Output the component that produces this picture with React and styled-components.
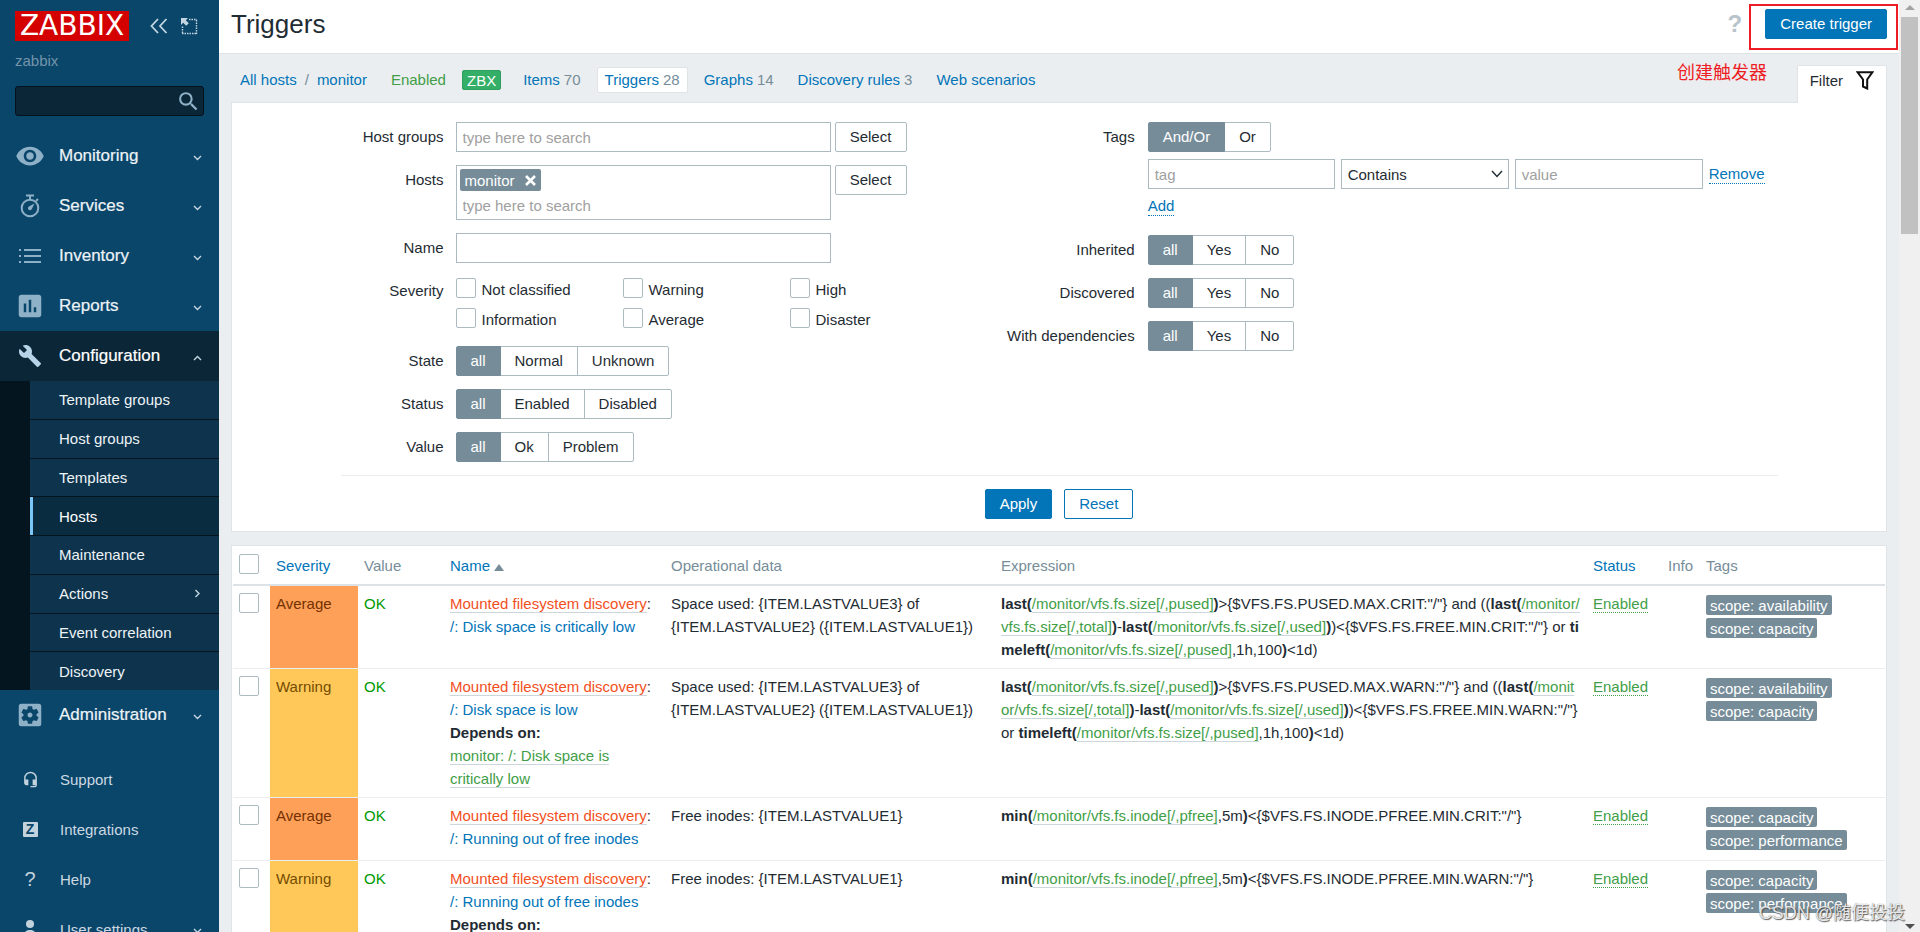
import styled, { createGlobalStyle, css } from 'styled-components';
import {
  MdRemoveRedEye,
  MdAssessment,
  MdBuild,
  MdSettingsApplications,
  MdHeadsetMic,
  MdSearch,
} from 'react-icons/md';

const GlobalStyle = createGlobalStyle`
  * {
    box-sizing: border-box;
  }
  body {
    margin: 0;
    background: #ebeef0;
    color: #1f2c33;
    font-family: 'Liberation Sans', Arial, 'Noto Sans CJK SC', sans-serif;
    font-size: 15px;
  }
  button, input, select {
    font: inherit;
    color: inherit;
  }
  a {
    color: #0275b8;
    text-decoration: none;
  }
`;

const Shell = styled.div`
  position: relative;
  display: flex;
  height: 100vh;
  overflow: hidden;
`;

/* ---------- sidebar ---------- */

const Sidebar = styled.aside`
  flex: 0 0 219px;
  background: #0a466a;
  overflow: hidden;
`;
const SidebarHeader = styled.div`
  display: flex;
  align-items: center;
  padding: 11px 0 0 15px;
`;
const Logo = styled.a`
  flex: 0 0 114px;
  height: 30px;
  margin-right: 21px;
  background: #d40000;
  color: white;
  font-family: 'DejaVu Sans', sans-serif;
  font-size: 28px;
  line-height: 30px;
  text-align: center;
`;
const HeaderIcon = styled.button`
  display: flex;
  padding: 0;
  margin-right: 13px;
  border: none;
  background: none;
  color: #c3d6e2;
`;
const ServerName = styled.div`
  padding: 11px 15px 0;
  line-height: 18px;
  color: #7394aa;
`;
const SearchForm = styled.form`
  display: flex;
  align-items: center;
  height: 30px;
  margin: 16px 15px 15px;
  padding-right: 2px;
  background: #0a2637;
  border: 1px solid #04121b;
  border-radius: 3px;
`;
const SearchInput = styled.input`
  flex: 1;
  min-width: 0;
  border: none;
  outline: none;
  background: none;
  color: white;
`;
const SearchButton = styled.button`
  display: flex;
  padding: 0;
  border: none;
  background: none;
  color: #8fb1c8;
`;
const MenuLink = styled.a`
  display: flex;
  align-items: center;
  height: 50px;
  padding-right: 17px;
  color: #edf3f7;
  font-size: 17px;
  -webkit-text-stroke: 0.2px;
  ${({ $open }) => $open && css`
    background: #0a2637;
    color: white;
  `}
`;
const MenuIcon = styled.span`
  display: flex;
  align-items: center;
  justify-content: center;
  flex: 0 0 59px;
  height: 32px;
  color: ${({ $open }) => ($open ? '#b6d3e7' : '#8fb1c8')};
`;
const MenuText = styled.span`
  flex: 1;
`;
const SubMenu = styled.div`
  display: grid;
  grid-auto-rows: 1fr;
  gap: 1px;
  min-height: 309px;
  padding-left: 30px;
  background: #04151f;
`;
const SubLink = styled.a`
  display: flex;
  align-items: center;
  justify-content: space-between;
  padding: 0 17px 0 26px;
  border-left: 3px solid ${({ $active }) => ($active ? '#7cc6f7' : 'transparent')};
  background: ${({ $active }) => ($active ? '#0a2c40' : '#0e334c')};
  color: ${({ $active }) => ($active ? 'white' : '#edf3f7')};
`;
const FooterMenu = styled.div`
  padding-top: 14px;
`;
const FooterLink = styled.a`
  display: flex;
  align-items: center;
  height: 50px;
  padding-right: 17px;
  color: #ccd9e2;
`;
const FooterIcon = styled.span`
  display: flex;
  align-items: center;
  justify-content: center;
  flex: 0 0 60px;
  font-size: 20px;
  color: #c3d3de;
`;
const ZBadge = styled.span`
  width: 15px;
  height: 15px;
  border-radius: 1px;
  background: #c3d3de;
  color: #0a466a;
  font-size: 14px;
  font-weight: bold;
  line-height: 15px;
  text-align: center;
`;

/* ---------- page frame ---------- */

const Content = styled.div`
  flex: 1;
  min-width: 0;
`;
const PageHeader = styled.header`
  display: flex;
  align-items: center;
  padding: 9px 12px 14px;
  background: white;
  border-bottom: 1px solid #dfe4e7;
`;
const Title = styled.h1`
  flex: 1;
  margin: 0;
  font-size: 26px;
  font-weight: normal;
  line-height: 30px;
`;
const HelpLink = styled.a`
  margin-right: 23px;
  color: #b8c4cb;
  font-size: 24px;
  font-weight: bold;
  line-height: 28px;
`;
const Button = styled.button`
  height: 30px;
  padding: 0 14px 1px;
  border: 1px solid #0275b8;
  border-radius: 2px;
  background: #0275b8;
  color: white;
`;
const OutlineButton = styled(Button)`
  background: white;
  color: #0275b8;
`;
const SelectButton = styled(Button)`
  flex: 0 0 72px;
  border-color: #acbbc2;
  background: white;
  color: #1f2c33;
`;
const Highlight = styled.div`
  position: absolute;
  top: 4px;
  right: 22px;
  width: 149px;
  height: 46px;
  border: 2px solid #ee1c25;
  pointer-events: none;
`;
const Annotation = styled.div`
  position: absolute;
  top: 58px;
  right: 153px;
  color: #ee1c25;
  font-family: 'Noto Sans CJK SC', sans-serif;
  font-size: 18px;
  line-height: 26px;
`;
const Watermark = styled.div`
  position: absolute;
  right: 15px;
  bottom: 6px;
  color: rgba(255, 255, 255, 0.85);
  font-family: 'Liberation Sans', 'Noto Sans CJK SC', sans-serif;
  font-size: 18px;
  line-height: 26px;
  text-shadow: 1px 1px 1px rgba(60, 60, 60, 0.8), 0 0 1px rgba(60, 60, 60, 0.7);
`;
const ScrollTrack = styled.div`
  flex: 0 0 21px;
  display: flex;
  flex-direction: column;
  align-items: center;
  padding: 5px 0 3px;
  background: #f0f0f0;
`;
const ScrollArrow = styled.span`
  border: 5px solid transparent;
  border-top-width: ${({ $down }) => ($down ? '5px' : '0')};
  border-bottom-width: ${({ $down }) => ($down ? '0' : '5px')};
  border-top-color: #505050;
  border-bottom-color: #a3a3a3;
`;
const ScrollThumb = styled.span`
  flex: 0 1 217px;
  width: 17px;
  margin: 7px 0 auto;
  background: #c1c1c1;
`;

/* ---------- host navigation ---------- */

const HostNav = styled.nav`
  display: flex;
  align-items: flex-end;
  justify-content: space-between;
  height: 48px;
  padding: 0 12px;
`;
const NavList = styled.div`
  display: flex;
  align-items: center;
  gap: 8px;
  padding: 0 0 9px 1px;
`;
const NavItem = styled.span`
  display: flex;
  gap: ${({ $crumbs }) => ($crumbs ? '8px' : '4px')};
  height: 26px;
  padding: 0 7px;
  border: 1px solid transparent;
  border-radius: 2px;
  line-height: 24px;
  color: #768d99;
  ${({ $selected }) => $selected && css`
    background: white;
    border-color: #dfe4e7;
  `}
`;
const GreenLink = styled.a`
  color: #429e47;
`;
const ZbxStatus = styled.span`
  height: 20px;
  margin-right: 6px;
  padding: 0 4px;
  border: 1px solid #2f9f5e;
  border-radius: 2px;
  background: #34af67;
  color: white;
  line-height: 19px;
`;
const FilterTab = styled.button`
  position: relative;
  display: flex;
  gap: 13px;
  height: 38px;
  margin-bottom: -1px;
  padding: 0 12px;
  border: 1px solid #dfe4e7;
  border-bottom: none;
  border-radius: 2px 2px 0 0;
  background: white;
  line-height: 30px;
  svg {
    margin-top: 5px;
  }
`;

/* ---------- filter ---------- */

const Panel = styled.section`
  margin: 0 12px 13px;
  background: white;
  border: 1px solid #dfe4e7;
`;
const FilterForm = styled.form`
  max-width: 1437px;
  margin: 0 auto;
`;
const FilterColumns = styled.div`
  display: flex;
  justify-content: space-between;
  align-items: flex-start;
  padding: 19px 13px 13px 0;
  border-bottom: 1px solid #ebeef0;
`;
const FieldGrid = styled.div`
  display: grid;
  grid-template-columns: ${({ $label }) => $label} auto;
  gap: 13px ${({ $gap }) => $gap};
`;
const FieldLabel = styled.label`
  line-height: 30px;
  text-align: right;
  white-space: nowrap;
`;
const FieldRow = styled.div`
  display: flex;
  align-items: flex-start;
  gap: ${({ $gap = '4px' }) => $gap};
`;
const inputBox = css`
  height: 30px;
  border: 1px solid #acbbc2;
  border-radius: 0;
  background: white;
  outline: none;
  &::placeholder {
    color: #a0a0a0;
  }
`;
const TextInput = styled.input`
  ${inputBox}
  width: ${({ $width }) => $width};
  padding: 0 6px;
`;
const MultiSelect = styled.div`
  width: 375px;
  border: 1px solid #acbbc2;
  input {
    ${inputBox}
    display: block;
    width: 100%;
    height: 28px;
    padding: 0 6px;
    border: none;
  }
`;
const ChipRow = styled.div`
  display: flex;
  padding: 3px 3px 0;
`;
const Chip = styled.span`
  display: flex;
  align-items: center;
  gap: 10px;
  height: 22px;
  padding: 0 5px;
  border-radius: 2px;
  background: #768d99;
  color: white;
`;
const ChipRemove = styled.button`
  display: flex;
  padding: 0;
  border: none;
  background: none;
  color: white;
`;
const CheckGrid = styled.div`
  display: grid;
  grid-template-columns: repeat(3, 167px);
  gap: 10px 0;
  padding: 2px 0 5px;
`;
const CheckLabel = styled.label`
  display: flex;
  gap: 6px;
  height: 20px;
  line-height: 24px;
`;
const Checkbox = styled.input.attrs({ type: 'checkbox' })`
  appearance: none;
  display: block;
  flex: 0 0 20px;
  width: 20px;
  height: 20px;
  margin: 0;
  border: 1px solid #acbbc2;
  border-radius: 2px;
  background: white;
`;
const Segments = styled.div`
  display: flex;
`;
const Segment = styled.label`
  position: relative;
  height: 30px;
  padding: 0 14px;
  border: 1px solid #acbbc2;
  line-height: 28px;
  & + & {
    margin-left: -1px;
  }
  &:first-child {
    border-radius: 2px 0 0 2px;
  }
  &:last-child {
    border-radius: 0 2px 2px 0;
  }
  &:has(input:checked) {
    z-index: 1;
    border-color: #768d99;
    background: #768d99;
    color: white;
  }
  input {
    position: absolute;
    inset: 0;
    margin: 0;
    opacity: 0;
  }
`;
const TagFields = styled.div`
  display: flex;
  flex-direction: column;
  align-items: flex-start;
  gap: 7px;
  padding-bottom: 6px;
`;
const SelectWrap = styled.div`
  position: relative;
  width: 168px;
  svg {
    position: absolute;
    top: 11px;
    right: 6px;
    pointer-events: none;
  }
`;
const Select = styled.select`
  ${inputBox}
  appearance: none;
  width: 100%;
  padding: 0 6px;
`;
const DottedButton = styled.button`
  padding: 0;
  border: none;
  border-bottom: 1px dotted #0275b8;
  background: none;
  color: #0275b8;
  line-height: 19px;
`;
const RemoveCell = styled.div`
  padding-top: 5px;
`;
const FilterActions = styled.div`
  display: flex;
  justify-content: center;
  gap: 12px;
  padding: 13px 0 12px;
`;

/* ---------- trigger table ---------- */

const TablePanel = styled(Panel)`
  padding: 0 1px;
`;
const Table = styled.table`
  width: 100%;
  table-layout: fixed;
  border-collapse: separate;
  border-spacing: 0;
`;
const Th = styled.th`
  width: ${({ $width }) => $width};
  height: 40px;
  padding: 1px 6px 0;
  border-bottom: 2px solid #dce2e6;
  color: #768d99;
  font-weight: normal;
  text-align: left;
  white-space: nowrap;
`;
const CheckTh = styled(Th)`
  padding-top: 8px;
  vertical-align: top;
`;
const Td = styled.td`
  padding: 6px 6px 7px;
  border-bottom: 1px solid #ebeef0;
  line-height: 23px;
  vertical-align: top;
`;
const CheckTd = styled(Td)`
  padding-top: 7px;
`;
const severityColors = {
  Average: ['#ffa059', '#733100'],
  Warning: ['#ffc859', '#734d00'],
};
const SeverityTd = styled(Td)`
  background: ${({ $level }) => severityColors[$level][0]};
  color: ${({ $level }) => severityColors[$level][1]};
`;
const OkTd = styled(Td)`
  color: #009900;
`;
const ExpressionTd = styled(Td)`
  word-break: break-all;
`;
const TagsTd = styled(Td)`
  padding: 9px 6px 10px;
`;
const TagList = styled.div`
  display: flex;
  flex-direction: column;
  align-items: flex-start;
  gap: 3px;
`;
const Tag = styled.span`
  height: 20px;
  padding: 0 4px;
  border-radius: 2px;
  background: #768d99;
  color: white;
  line-height: 21px;
`;
const SortArrow = styled.span`
  display: inline-block;
  margin-left: 4px;
  border: 5px solid transparent;
  border-top: none;
  border-bottom: 7px solid #768d99;
`;
const ItemLink = styled.a`
  border-bottom: 1px solid #cdd6da;
  color: #429e47;
`;
const RuleLink = styled(ItemLink)`
  color: #f24f1d;
`;
const StatusLink = styled.a`
  border-bottom: 1px dotted #429e47;
  color: #429e47;
`;

/* ---------- icons ---------- */

const CollapseIcon = () => (
  <svg width="18" height="16" viewBox="0 0 18 16" fill="none" stroke="currentColor" strokeWidth="1.8">
    <path d="M8 1 1.5 8 8 15M16.5 1 10 8l6.500 7" />
  </svg>
);

const KioskIcon = () => (
  <svg width="17" height="17" viewBox="0 0 17 17" fill="none" stroke="currentColor">
    <path d="M8 1.500h8M15.500 2v14M15 15.500H1M1.500 15V8" strokeWidth="1.400" strokeDasharray="1.500 1" />
    <path d="M0 0h7L4.800 2.200l3 3-2.600 2.600-3-3L0 7z" fill="currentColor" stroke="none" />
  </svg>
);

const StopwatchIcon = () => (
  <svg width="20" height="24" viewBox="0 0 20 24" fill="none" stroke="currentColor" strokeWidth="2">
    <circle cx="10" cy="14" r="8.300" />
    <path d="M6 1.500h8M10 2v4M16 7l2-2" />
    <path d="M14.500 9.500 11.800 15a2 2 0 1 1-2.900-2.500z" fill="currentColor" stroke="none" />
  </svg>
);

const ListIcon = () => (
  <svg width="24" height="16" viewBox="0 0 24 16" fill="currentColor">
    <path d="M1 1h2v2H1zM1 7h2v2H1zM1 13h2v2H1zM6 1h17v2H6zM6 7h17v2H6zM6 13h17v2H6z" />
  </svg>
);

const UserIcon = () => (
  <svg width="16" height="18" viewBox="0 0 16 18" fill="currentColor">
    <circle cx="8" cy="4" r="4" />
    <path d="M2 17c0-5 2-7 6-7s6 2 6 7z" />
  </svg>
);

const Chevron = ({ up, right }) => (
  <svg width="9" height="9" viewBox="0 0 9 9" fill="none" stroke="#c3d6e2" strokeWidth="1.400">
    <path d={right ? 'M2.500 1 6 4.500 2.500 8' : up ? 'M1 8l3.500-3.500L8 8' : 'M1 4l3.500 3.500L8 4'} />
  </svg>
);

const FunnelIcon = () => (
  <svg width="18" height="19" viewBox="0 0 18 19" fill="none" stroke="#111" strokeWidth="2">
    <path d="M1.500 1.200h15L11.200 8.500v9L7 15.500v-7z" />
  </svg>
);

/* ---------- data ---------- */

const menu = [
  { text: 'Monitoring', icon: <MdRemoveRedEye size={30} /> },
  { text: 'Services', icon: <StopwatchIcon /> },
  { text: 'Inventory', icon: <ListIcon /> },
  { text: 'Reports', icon: <MdAssessment size={30} /> },
];

const subMenu = [
  'Template groups',
  'Host groups',
  'Templates',
  'Hosts',
  'Maintenance',
  'Actions',
  'Event correlation',
  'Discovery',
];

const footerMenu = [
  { text: 'Support', icon: <MdHeadsetMic size={17} /> },
  { text: 'Integrations', icon: <ZBadge>Z</ZBadge> },
  { text: 'Help', icon: '?' },
  { text: 'User settings', icon: <UserIcon />, more: true },
];

const hostLinks = [
  ['Items', 70],
  ['Triggers', 28],
  ['Graphs', 14],
  ['Discovery rules', 3],
  ['Web scenarios'],
];

const severities = ['Not classified', 'Warning', 'High', 'Information', 'Average', 'Disaster'];

const spaceData = 'Space used: {ITEM.LASTVALUE3} of {ITEM.LASTVALUE2} ({ITEM.LASTVALUE1})';

const SpaceExpression = ({ level }) => (
  <>
    <b>last(</b><ItemLink href="#">/monitor/vfs.fs.size[/,pused]</ItemLink><b>)</b>
    {`>{$VFS.FS.PUSED.MAX.${level}:"/"} and ((`}
    <b>last(</b><ItemLink href="#">/monitor/vfs.fs.size[/,total]</ItemLink><b>)</b>-
    <b>last(</b><ItemLink href="#">/monitor/vfs.fs.size[/,used]</ItemLink><b>)</b>
    {`)<{$VFS.FS.FREE.MIN.${level}:"/"} or `}
    <b>timeleft(</b><ItemLink href="#">/monitor/vfs.fs.size[/,pused]</ItemLink>,1h,100<b>)</b>
    {'<1d)'}
  </>
);

const InodeExpression = ({ level }) => (
  <>
    <b>min(</b><ItemLink href="#">/monitor/vfs.fs.inode[/,pfree]</ItemLink>,5m<b>)</b>
    {`<{$VFS.FS.INODE.PFREE.MIN.${level}:"/"}`}
  </>
);

const triggers = [
  {
    severity: 'Average',
    name: '/: Disk space is critically low',
    data: spaceData,
    expression: <SpaceExpression level="CRIT" />,
    tags: ['scope: availability', 'scope: capacity'],
  },
  {
    severity: 'Warning',
    name: '/: Disk space is low',
    depends: 'monitor: /: Disk space is critically low',
    data: spaceData,
    expression: <SpaceExpression level="WARN" />,
    tags: ['scope: availability', 'scope: capacity'],
  },
  {
    severity: 'Average',
    name: '/: Running out of free inodes',
    data: 'Free inodes: {ITEM.LASTVALUE1}',
    expression: <InodeExpression level="CRIT" />,
    tags: ['scope: capacity', 'scope: performance'],
  },
  {
    severity: 'Warning',
    name: '/: Running out of free inodes',
    depends: 'monitor: /: Running out of free inodes',
    data: 'Free inodes: {ITEM.LASTVALUE1}',
    expression: <InodeExpression level="WARN" />,
    tags: ['scope: capacity', 'scope: performance'],
  },
];

/* ---------- components ---------- */

function MenuItem({ icon, text, open }) {
  return (
    <MenuLink href="#" $open={open}>
      <MenuIcon $open={open}>{icon}</MenuIcon>
      <MenuText>{text}</MenuText>
      <Chevron up={open} />
    </MenuLink>
  );
}

function SideMenu() {
  return (
    <Sidebar>
      <SidebarHeader>
        <Logo href="#">ZABBIX</Logo>
        <HeaderIcon aria-label="Collapse sidebar"><CollapseIcon /></HeaderIcon>
        <HeaderIcon aria-label="Hide sidebar"><KioskIcon /></HeaderIcon>
      </SidebarHeader>
      <ServerName>zabbix</ServerName>
      <SearchForm>
        <SearchInput type="text" aria-label="Search" />
        <SearchButton type="button" aria-label="Search"><MdSearch size={25} /></SearchButton>
      </SearchForm>
      {menu.map((item) => <MenuItem key={item.text} {...item} />)}
      <MenuItem text="Configuration" icon={<MdBuild size={24} />} open />
      <SubMenu>
        {subMenu.map((text) => (
          <SubLink key={text} href="#" $active={text === 'Hosts'}>
            {text}
            {text === 'Actions' && <Chevron right />}
          </SubLink>
        ))}
      </SubMenu>
      <MenuItem text="Administration" icon={<MdSettingsApplications size={30} />} />
      <FooterMenu>
        {footerMenu.map(({ text, icon, more }) => (
          <FooterLink key={text} href="#">
            <FooterIcon>{icon}</FooterIcon>
            <MenuText>{text}</MenuText>
            {more && <Chevron />}
          </FooterLink>
        ))}
      </FooterMenu>
    </Sidebar>
  );
}

function RadioField({ label, name, options }) {
  return (
    <>
      <FieldLabel as="span" id={`${name}-label`}>{label}</FieldLabel>
      <Segments role="radiogroup" aria-labelledby={`${name}-label`}>
        {options.map((option, i) => (
          <Segment key={option}>
            <input type="radio" name={name} defaultChecked={i === 0} />
            {option}
          </Segment>
        ))}
      </Segments>
    </>
  );
}

function Filter() {
  return (
    <Panel>
      <FilterForm>
        <FilterColumns>
          <FieldGrid $label="103px" $gap="12px">
            <FieldLabel htmlFor="groups">Host groups</FieldLabel>
            <FieldRow>
              <MultiSelect>
                <input id="groups" type="text" placeholder="type here to search" />
              </MultiSelect>
              <SelectButton type="button">Select</SelectButton>
            </FieldRow>
            <FieldLabel htmlFor="hosts">Hosts</FieldLabel>
            <FieldRow>
              <MultiSelect>
                <ChipRow>
                  <Chip>
                    monitor
                    <ChipRemove type="button" aria-label="Remove monitor">
                      <svg width="11" height="11" viewBox="0 0 11 11" stroke="currentColor" strokeWidth="2.600">
                        <path d="M1 1l9 9M10 1l-9 9" />
                      </svg>
                    </ChipRemove>
                  </Chip>
                </ChipRow>
                <input id="hosts" type="text" placeholder="type here to search" />
              </MultiSelect>
              <SelectButton type="button">Select</SelectButton>
            </FieldRow>
            <FieldLabel htmlFor="name">Name</FieldLabel>
            <TextInput id="name" type="text" $width="375px" />
            <FieldLabel as="span">Severity</FieldLabel>
            <CheckGrid>
              {severities.map((text) => (
                <CheckLabel key={text}><Checkbox />{text}</CheckLabel>
              ))}
            </CheckGrid>
            <RadioField label="State" name="state" options={['all', 'Normal', 'Unknown']} />
            <RadioField label="Status" name="status" options={['all', 'Enabled', 'Disabled']} />
            <RadioField label="Value" name="value" options={['all', 'Ok', 'Problem']} />
          </FieldGrid>
          <FieldGrid $label="128px" $gap="13px">
            <FieldLabel as="span" id="tags-label">Tags</FieldLabel>
            <TagFields>
              <Segments role="radiogroup" aria-labelledby="tags-label">
                <Segment><input type="radio" name="evaltype" defaultChecked />And/Or</Segment>
                <Segment><input type="radio" name="evaltype" />Or</Segment>
              </Segments>
              <FieldRow $gap="6px">
                <TextInput type="text" placeholder="tag" aria-label="tag" $width="187px" />
                <SelectWrap>
                  <Select aria-label="Operator" defaultValue="Contains">
                    <option>Contains</option>
                    <option>Equals</option>
                  </Select>
                  <svg width="12" height="8" viewBox="0 0 12 8" fill="none" stroke="#1f2c33" strokeWidth="1.400">
                    <path d="M1 1l5 5.500L11 1" />
                  </svg>
                </SelectWrap>
                <TextInput type="text" placeholder="value" aria-label="value" $width="188px" />
                <RemoveCell><DottedButton type="button">Remove</DottedButton></RemoveCell>
              </FieldRow>
              <DottedButton type="button">Add</DottedButton>
            </TagFields>
            <RadioField label="Inherited" name="inherited" options={['all', 'Yes', 'No']} />
            <RadioField label="Discovered" name="discovered" options={['all', 'Yes', 'No']} />
            <RadioField label="With dependencies" name="dependent" options={['all', 'Yes', 'No']} />
          </FieldGrid>
        </FilterColumns>
        <FilterActions>
          <Button type="button">Apply</Button>
          <OutlineButton type="button">Reset</OutlineButton>
        </FilterActions>
      </FilterForm>
    </Panel>
  );
}

function TriggerTable() {
  return (
    <TablePanel>
      <Table>
        <thead>
          <tr>
            <CheckTh $width="37px"><Checkbox aria-label="Select all" /></CheckTh>
            <Th $width="88px"><a href="#">Severity</a></Th>
            <Th $width="86px">Value</Th>
            <Th $width="221px"><a href="#">Name<SortArrow /></a></Th>
            <Th $width="330px">Operational data</Th>
            <Th>Expression</Th>
            <Th $width="75px"><a href="#">Status</a></Th>
            <Th $width="38px">Info</Th>
            <Th $width="185px">Tags</Th>
          </tr>
        </thead>
        <tbody>
          {triggers.map((trigger, i) => (
            <tr key={i}>
              <CheckTd><Checkbox aria-label={trigger.name} /></CheckTd>
              <SeverityTd $level={trigger.severity}>{trigger.severity}</SeverityTd>
              <OkTd>OK</OkTd>
              <Td>
                <RuleLink href="#">Mounted filesystem discovery</RuleLink>: <a href="#">{trigger.name}</a>
                {trigger.depends && (
                  <>
                    <br /><b>Depends on:</b>
                    <br /><ItemLink href="#">{trigger.depends}</ItemLink>
                  </>
                )}
              </Td>
              <Td>{trigger.data}</Td>
              <ExpressionTd>{trigger.expression}</ExpressionTd>
              <Td><StatusLink href="#">Enabled</StatusLink></Td>
              <Td />
              <TagsTd>
                <TagList>
                  {trigger.tags.map((tag) => <Tag key={tag}>{tag}</Tag>)}
                </TagList>
              </TagsTd>
            </tr>
          ))}
        </tbody>
      </Table>
    </TablePanel>
  );
}

export default function App() {
  return (
    <>
      <GlobalStyle />
      <Shell>
        <SideMenu />
        <Content>
          <PageHeader>
            <Title>Triggers</Title>
            <HelpLink href="#">?</HelpLink>
            <Button>Create trigger</Button>
          </PageHeader>
          <HostNav>
            <NavList>
              <NavItem $crumbs>
                <a href="#">All hosts</a>
                <span>/</span>
                <a href="#">monitor</a>
              </NavItem>
              <NavItem><GreenLink href="#">Enabled</GreenLink></NavItem>
              <ZbxStatus>ZBX</ZbxStatus>
              {hostLinks.map(([text, count]) => (
                <NavItem key={text} $selected={text === 'Triggers'}>
                  <a href="#">{text}</a>
                  {count && <span>{count}</span>}
                </NavItem>
              ))}
            </NavList>
            <FilterTab>Filter<FunnelIcon /></FilterTab>
          </HostNav>
          <Filter />
          <TriggerTable />
        </Content>
        <ScrollTrack>
          <ScrollArrow />
          <ScrollThumb />
          <ScrollArrow $down />
        </ScrollTrack>
        <Highlight />
        <Annotation>创建触发器</Annotation>
        <Watermark>CSDN @随便投投</Watermark>
      </Shell>
    </>
  );
}
